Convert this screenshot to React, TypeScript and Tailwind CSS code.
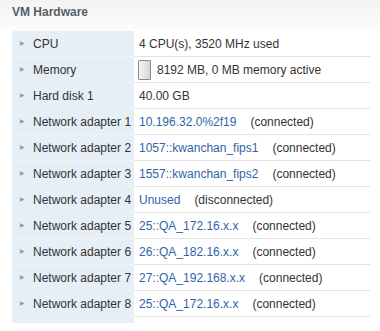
import React from "react";

type Row = { label: string; value: React.ReactNode };

const Link = ({ children }: { children: React.ReactNode }) => (
  <span className="text-[#2f64a8]">{children}</span>
);

const Status = ({ children }: { children: React.ReactNode }) => (
  <span className="ml-[14px]">{children}</span>
);

const rows: Row[] = [
  { label: "CPU", value: <span>4 CPU(s), 3520 MHz used</span> },
  {
    label: "Memory",
    value: (
      <span className="flex items-center">
        <span className="inline-block w-[13px] h-[20px] border border-[#8a8a8a] rounded-[1px] bg-gradient-to-r from-[#f4f4f4] to-[#d6d6d6] mr-[6px] ml-[-1px]" />
        <span>8192 MB, 0 MB memory active</span>
      </span>
    ),
  },
  { label: "Hard disk 1", value: <span>40.00 GB</span> },
  { label: "Network adapter 1", value: <span><Link>10.196.32.0%2f19</Link><Status>(connected)</Status></span> },
  { label: "Network adapter 2", value: <span><Link>1057::kwanchan_fips1</Link><Status>(connected)</Status></span> },
  { label: "Network adapter 3", value: <span><Link>1557::kwanchan_fips2</Link><Status>(connected)</Status></span> },
  { label: "Network adapter 4", value: <span><Link>Unused</Link><Status>(disconnected)</Status></span> },
  { label: "Network adapter 5", value: <span><Link>25::QA_172.16.x.x</Link><Status>(connected)</Status></span> },
  { label: "Network adapter 6", value: <span><Link>26::QA_182.16.x.x</Link><Status>(connected)</Status></span> },
  { label: "Network adapter 7", value: <span><Link>27::QA_192.168.x.x</Link><Status>(connected)</Status></span> },
  { label: "Network adapter 8", value: <span><Link>25::QA_172.16.x.x</Link><Status>(connected)</Status></span> },
];

export default function App() {
  return (
    <div
      className="w-[380px] h-[331px] bg-white text-[12px] text-[#333] overflow-hidden"
      style={{ fontFamily: '"Liberation Sans", Arial, sans-serif' }}
    >
      <div className="h-[31px] bg-gradient-to-b from-[#f3f3f3] to-[#fdfdfd] pl-[12px] pt-[3px]">
        <span className="font-bold text-[#555e66] text-[12px]">VM Hardware</span>
      </div>
      <div className="pl-[12px] pr-[10px]">
        {rows.map((r, i) => (
          <div key={i} className="flex h-[26px]">
            <div className="w-[122px] bg-[#e6eef6] border-b border-[#f0f4f9] flex items-center pl-[8px]">
              <span className="text-[#9a9a9a] text-[6px] mr-[8px]">▶</span>
              <span>{r.label}</span>
            </div>
            <div className="flex-1 border-b border-[#e2e2e2] flex items-center pl-[5px]">
              {r.value}
            </div>
          </div>
        ))}
        <div className="w-[122px] h-[6px] bg-[#e6eef6]" />
      </div>
    </div>
  );
}
